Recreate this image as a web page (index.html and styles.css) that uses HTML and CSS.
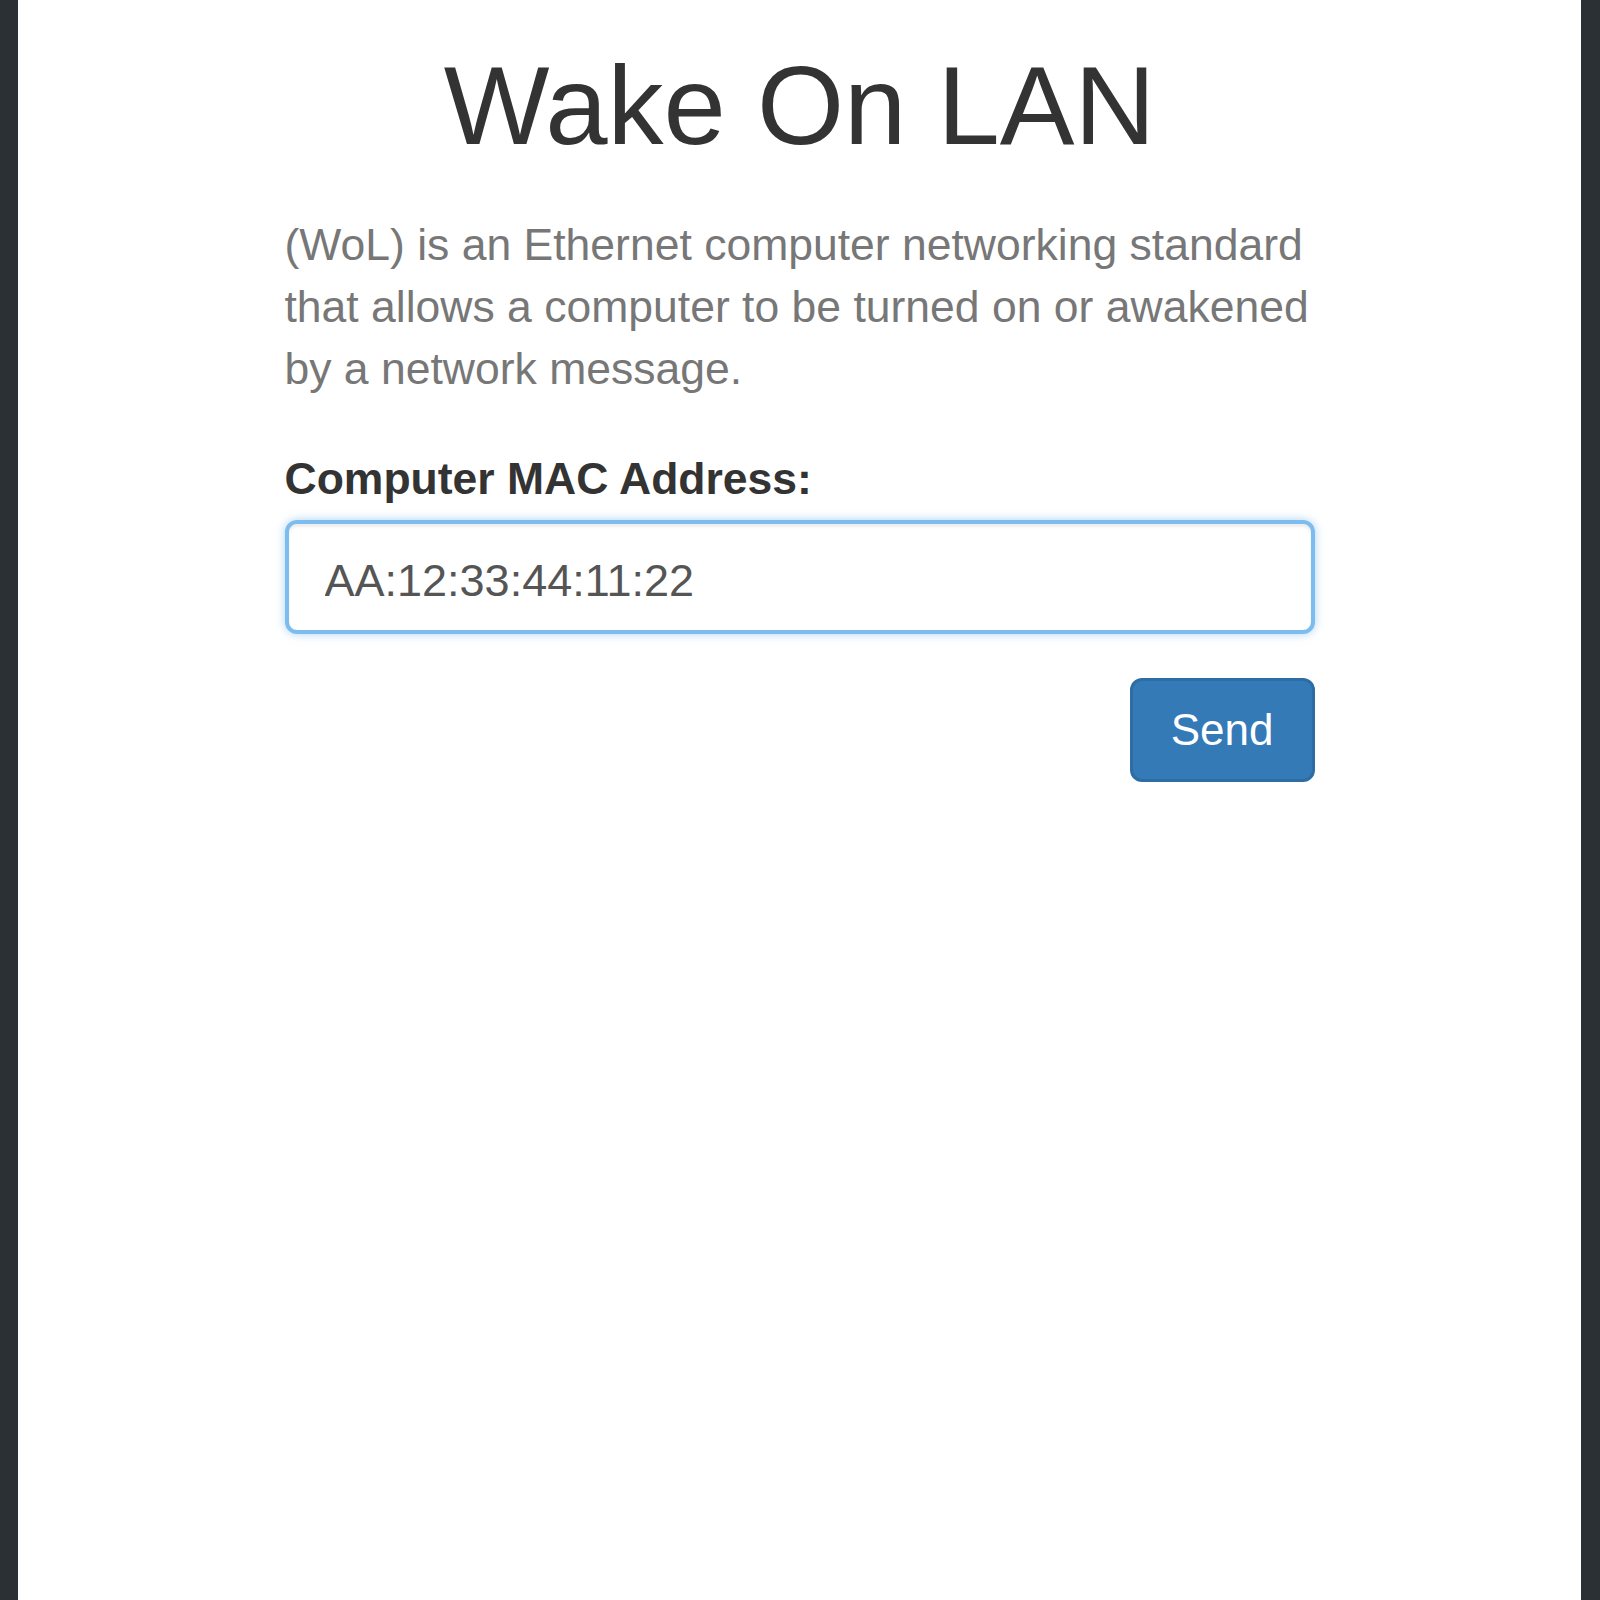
FILE: index.html
```html
<!DOCTYPE html>
<html lang="en">
<head>
<meta charset="utf-8">
<title>Wake On LAN</title>
<link rel="stylesheet" href="styles.css">
</head>
<body>
<div class="panel">
  <div class="content">
    <h1 class="title">Wake On LAN</h1>
    <p class="intro">(WoL) is an Ethernet computer networking standard that allows a computer to be turned on or awakened by a network message.</p>
    <form class="wol-form">
      <label class="field-label" for="mac">Computer MAC Address:</label>
      <input class="field-input" id="mac" type="text" value="AA:12:33:44:11:22">
      <div class="actions">
        <button class="btn-send" type="button">Send</button>
      </div>
    </form>
  </div>
</div>
</body>
</html>
```
FILE: styles.css
```css
html, body {
  margin: 0;
  padding: 0;
}
body {
  background: #2b3034;
  font-family: "Liberation Sans", Arial, sans-serif;
  color: #333;
}
.panel {
  margin: 0 19px 0 18px;
  background: #fff;
  min-height: 1600px;
  padding-top: 45px;
  box-sizing: border-box;
}
.content {
  width: 1030px;
  margin: 0 auto;
}
.title {
  margin: 0;
  font-size: 112px;
  line-height: 122px;
  font-weight: 400;
  text-align: center;
  color: #333;
}
.intro {
  margin: 47px 0 0;
  font-size: 44.5px;
  line-height: 62px;
  color: #777;
}
.wol-form {
  margin: 0;
}
.field-label {
  display: block;
  margin-top: 48px;
  font-size: 44.5px;
  line-height: 61px;
  font-weight: 700;
  color: #333;
}
.field-input {
  display: block;
  margin-top: 11px;
  width: 100%;
  height: 114px;
  box-sizing: border-box;
  padding: 8px 36px 0;
  border: 4px solid #7dbcee;
  border-radius: 12px;
  font-family: "Liberation Sans", Arial, sans-serif;
  font-size: 45px;
  color: #555;
  background: #fff;
  outline: none;
  box-shadow: inset 0 3px 3px rgba(0,0,0,0.075), 0 0 10px rgba(102,175,233,0.55);
}
.actions {
  display: flex;
  justify-content: flex-end;
  margin-top: 44px;
}
.btn-send {
  height: 104px;
  box-sizing: border-box;
  padding: 0 38px;
  border: 3px solid #2e6da4;
  border-radius: 12px;
  background: #337ab7;
  color: #fff;
  font-family: "Liberation Sans", Arial, sans-serif;
  font-size: 44px;
  font-weight: 400;
  cursor: pointer;
}
```
